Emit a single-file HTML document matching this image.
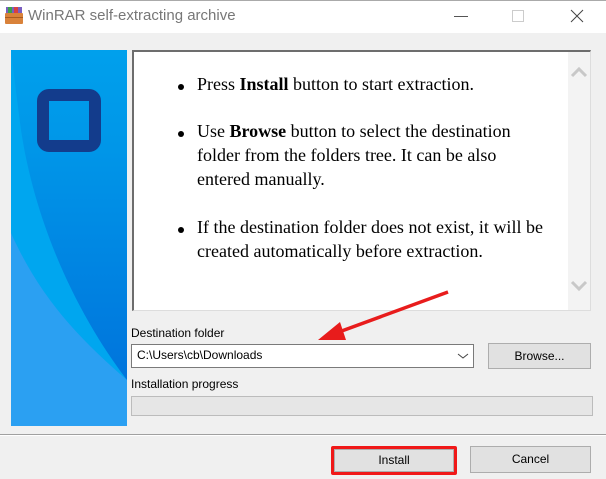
<!DOCTYPE html>
<html><head><style>
body{margin:0;width:606px;height:479px;background:#f0f0f0;position:relative;overflow:hidden;font-family:"Liberation Sans",sans-serif;}
.a{position:absolute}
.title{left:0;top:0;width:606px;height:33px;background:#fff;border-top:1px solid #aaa;box-sizing:border-box}
.tt{left:28px;top:7px;font-size:15px;color:#777}
.txt{font-family:"Liberation Serif",serif;font-size:18px;color:#000;line-height:24px}
.dot{width:6px;height:6px;border-radius:50%;background:#000}
.btn{background:#e1e1e1;border:1px solid #adadad;box-sizing:border-box;font-size:12px;text-align:center}
.lbl{font-size:12px;color:#000}
</style></head><body>
<div class="a title"></div>
<svg class="a" style="left:4px;top:7px" width="20" height="18"><rect x="2" y="0" width="16" height="6" fill="#7a5ec0"/><rect x="4" y="0" width="4" height="6" fill="#3aa04a"/><rect x="10" y="0" width="4" height="6" fill="#d84040"/><rect x="1" y="6" width="18" height="11" rx="1" fill="#d9823a"/><rect x="1" y="10" width="18" height="1" fill="#a85a20"/></svg>
<div class="a tt">WinRAR self-extracting archive</div>
<div class="a" style="left:454px;top:16px;width:14px;height:1px;background:#555"></div>
<div class="a" style="left:512px;top:10px;width:10px;height:10px;border:1px solid #ccc"></div>
<svg class="a" style="left:570px;top:9px" width="14" height="14"><path d="M1 1L13 13M13 1L1 13" stroke="#444" stroke-width="1"/></svg>

<svg class="a" style="left:11px;top:50px" width="116" height="376">
<defs><linearGradient id="g" x1="0" y1="0" x2="0" y2="1"><stop offset="0" stop-color="#00a0ec"/><stop offset="0.3" stop-color="#0096e8"/><stop offset="1" stop-color="#0074dc"/></linearGradient></defs>
<rect width="116" height="376" fill="#00a6ef"/>
<path d="M0 0 H116 V330 C70 270 25 180 10 80 C6 50 3 25 0 0Z" fill="url(#g)"/>
<path d="M0 183 C30 250 70 290 116 330 V376 H0Z" fill="#2ba0f2"/>
<rect x="32" y="45" width="52" height="51" rx="6" fill="none" stroke="#133c8c" stroke-width="12"/>
</svg>

<div class="a" style="left:132px;top:50px;width:459px;height:261px;background:#fff;border-top:2px solid #6d6d6d;border-left:2px solid #6d6d6d;border-right:1px solid #ddd;border-bottom:1px solid #ddd;box-sizing:border-box"></div>
<div class="a" style="left:568px;top:52px;width:22px;height:258px;background:#f3f3f3"></div>
<svg class="a" style="left:570px;top:66px" width="18" height="12"><path d="M2 10L9 3L16 10" stroke="#c8c8c8" stroke-width="3" fill="none"/></svg>
<svg class="a" style="left:570px;top:280px" width="18" height="12"><path d="M2 2L9 9L16 2" stroke="#c8c8c8" stroke-width="3" fill="none"/></svg>

<div class="a dot" style="left:178px;top:84px"></div><div class="a txt" style="left:197px;top:72px">Press <b>Install</b> button to start extraction.</div>
<div class="a dot" style="left:178px;top:131px"></div><div class="a txt" style="left:197px;top:119px;width:360px">Use <b>Browse</b> button to select the destination<br>folder from the folders tree. It can be also<br>entered manually.</div>
<div class="a dot" style="left:178px;top:227px"></div><div class="a txt" style="left:197px;top:215px;width:370px">If the destination folder does not exist, it will be<br>created automatically before extraction.</div>

<svg class="a" style="left:300px;top:280px" width="160" height="70"><path d="M148 12L28 56" stroke="#e81c1c" stroke-width="3.5"/><path d="M18 60L40 42L46 60Z" fill="#e81c1c"/></svg>

<div class="a lbl" style="left:131px;top:326px">Destination folder</div>
<div class="a" style="left:131px;top:344px;width:343px;height:24px;background:#fff;border:1px solid #7a7a7a;box-sizing:border-box"></div>
<div class="a lbl" style="left:137px;top:348px">C:\Users\cb\Downloads</div>
<svg class="a" style="left:457px;top:352px" width="12" height="8"><path d="M1 2L6 6L11 2" stroke="#444" fill="none"/></svg>
<div class="a btn" style="left:488px;top:343px;width:103px;height:26px;line-height:24px">Browse...</div>

<div class="a lbl" style="left:131px;top:377px">Installation progress</div>
<div class="a" style="left:131px;top:396px;width:462px;height:20px;background:#e6e6e6;border:1px solid #bcbcbc;box-sizing:border-box"></div>

<div class="a" style="left:0;top:434px;width:606px;height:1px;background:#a0a0a0"></div>
<div class="a" style="left:0;top:435px;width:606px;height:1px;background:#fff"></div>

<div class="a" style="left:331px;top:446px;width:126px;height:29px;border:3px solid #f01818;border-radius:2px;box-sizing:border-box"></div>
<div class="a btn" style="left:334px;top:449px;width:120px;height:23px;line-height:21px">Install</div>
<div class="a btn" style="left:470px;top:446px;width:121px;height:27px;line-height:25px">Cancel</div>
</body></html>
